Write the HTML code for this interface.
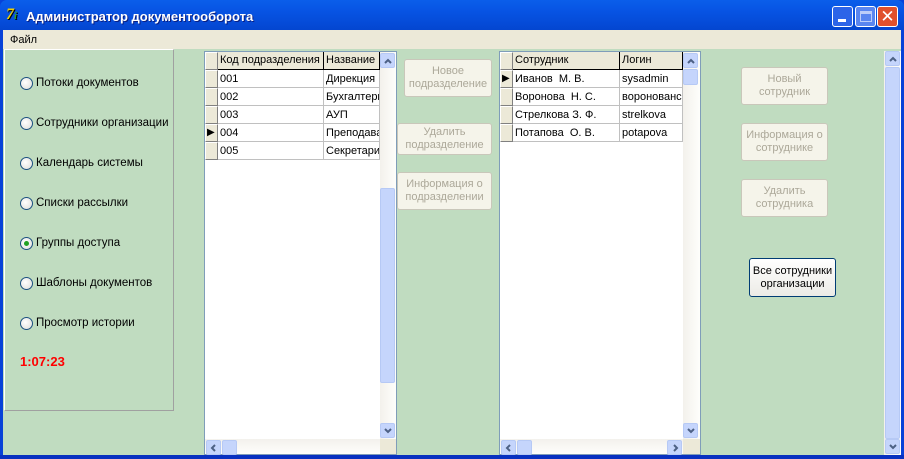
<!DOCTYPE html>
<html><head><meta charset="utf-8"><style>
*{box-sizing:border-box;margin:0;padding:0}
body{width:904px;height:459px;overflow:hidden;font-family:Tahoma,"Liberation Sans","DejaVu Sans",sans-serif;font-size:11px;position:relative;background:#0842D8}
.abs{position:absolute}
.title{left:0;top:0;width:904px;height:30px;background:linear-gradient(#0A5EEA,#0753E3 40%,#0446D0);border-radius:7px 7px 0 0}
.ttext{left:26px;top:9px;color:#fff;font-weight:bold;font-size:13px;text-shadow:1px 1px #0A1E80}
.menu{left:3px;top:30px;width:898px;height:19px;background:#ECE9D8}
.body{left:3px;top:49px;width:898px;height:406px;background:#C0DCC0}
.panel{left:4px;top:49px;width:170px;height:362px;border-left:1px solid #fff;border-top:1px solid #fff;border-right:1px solid #A0A0A0;border-bottom:1px solid #A0A0A0}
.radio{left:20px;width:13px;height:13px;border-radius:50%;border:1px solid #1C5180;background:radial-gradient(circle at 40% 40%,#fff,#DCDCD7)}
.rl{left:36px;color:#000;font-size:11.5px}
.grid{background:#fff;border:1px solid #7F9DB9}
.hd{position:absolute;background:#ECE9D8;border-right:1px solid #000;border-bottom:1px solid #000;height:18px;padding:2px 2px;white-space:nowrap;overflow:hidden}
.cell{position:absolute;height:18px;border-right:1px solid #C0C0C0;border-bottom:1px solid #C0C0C0;padding:3px 2px;white-space:nowrap;overflow:hidden}
.ind{position:absolute;background:#ECE9D8;border-right:1px solid #808080;border-bottom:1px solid #808080;border-left:1px solid #fff;border-top:1px solid #fff;height:18px;width:13px}
.vs{background:linear-gradient(90deg,#F3F1EC,#FEFEFB)}
.sb{position:absolute;width:15px;height:15px;border:1px solid #B6C9F5;background:#C5D5FC;border-radius:2px}
.sb svg{position:absolute;left:3px;top:3px}
.btn{position:absolute;background:#F5F4EA;border:1px solid #C9C7BA;border-radius:3px;color:#ACA899;text-align:center;display:flex;align-items:center;justify-content:center;line-height:13px}
.wb{position:absolute;top:6px;width:21px;height:21px;border:1px solid #fff;border-radius:3px;background:#2C64E8}
</style></head><body>
<div class="abs title"></div>
<div class="abs" style="left:6px;top:6px;color:#F0D000;font-weight:bold;font-size:16px;font-style:italic;font-family:'Liberation Serif',serif;text-shadow:1px 1px #000">7<span style="color:#30A030;font-size:11px">i</span></div>
<div class="abs ttext">Администратор документооборота</div>
<div class="wb" style="left:832px"><div class="abs" style="left:5px;top:12px;width:8px;height:3px;background:#fff"></div></div>
<div class="wb" style="left:855px;background:#5A86F0"><div class="abs" style="left:4px;top:4px;width:12px;height:11px;border:1px solid #fff;border-top-width:3px;opacity:.6"></div></div>
<div class="wb" style="left:877px;background:#E0502C;color:#fff;font-size:17px;font-weight:bold;text-align:center;line-height:19px">✕</div>
<div class="abs menu"><span class="abs" style="left:7px;top:4px">Файл</span></div>
<div class="abs body"></div>
<div class="abs panel"></div>
<div class="abs radio" style="top:77px"></div><div class="abs rl" style="top:77px">Потоки документов</div>
<div class="abs radio" style="top:117px"></div><div class="abs rl" style="top:117px">Сотрудники организации</div>
<div class="abs radio" style="top:157px"></div><div class="abs rl" style="top:157px">Календарь системы</div>
<div class="abs radio" style="top:197px"></div><div class="abs rl" style="top:197px">Списки рассылки</div>
<div class="abs radio" style="top:237px"><div class="abs" style="left:3px;top:3px;width:5px;height:5px;border-radius:50%;background:#21A121"></div></div><div class="abs rl" style="top:237px">Группы доступа</div>
<div class="abs radio" style="top:277px"></div><div class="abs rl" style="top:277px">Шаблоны документов</div>
<div class="abs radio" style="top:317px"></div><div class="abs rl" style="top:317px">Просмотр истории</div>
<div class="abs" style="left:20px;top:354px;color:#F00;font-weight:bold;font-size:13px">1:07:23</div>

<!-- grid1 -->
<div class="abs grid" style="left:204px;top:51px;width:193px;height:404px">
<div class="ind" style="left:0;top:0"></div>
<div class="hd" style="left:13px;top:0;width:106px">Код подразделения</div>
<div class="hd" style="left:119px;top:0;width:56px">Название</div>
<div class="ind" style="left:0;top:18px"></div><div class="cell" style="left:13px;top:18px;width:106px">001</div><div class="cell" style="left:119px;top:18px;width:56px">Дирекция</div>
<div class="ind" style="left:0;top:36px"></div><div class="cell" style="left:13px;top:36px;width:106px">002</div><div class="cell" style="left:119px;top:36px;width:56px">Бухгалтерия</div>
<div class="ind" style="left:0;top:54px"></div><div class="cell" style="left:13px;top:54px;width:106px">003</div><div class="cell" style="left:119px;top:54px;width:56px">АУП</div>
<div class="ind" style="left:0;top:72px"><span style="position:absolute;left:1px;top:2px;font-size:10px">▶</span></div><div class="cell" style="left:13px;top:72px;width:106px">004</div><div class="cell" style="left:119px;top:72px;width:56px">Преподаватели</div>
<div class="ind" style="left:0;top:90px"></div><div class="cell" style="left:13px;top:90px;width:106px">005</div><div class="cell" style="left:119px;top:90px;width:56px">Секретариат</div>
<div class="abs vs" style="left:175px;top:0;width:16px;height:387px"></div>
<div class="sb" style="left:175px;top:1px"><svg width="8" height="8"><path d="M1 6L4 3L7 6" stroke="#4D6185" stroke-width="2" fill="none"/></svg></div>
<div class="sb" style="left:175px;top:136px;height:195px"></div>
<div class="sb" style="left:175px;top:371px"><svg width="8" height="8"><path d="M1 2L4 5L7 2" stroke="#4D6185" stroke-width="2" fill="none"/></svg></div>
<div class="abs" style="left:0;top:387px;width:191px;height:15px;background:linear-gradient(#F3F1EC,#FEFEFB)"></div>
<div class="sb" style="left:1px;top:388px"><svg width="8" height="8"><path d="M5 1L2 4L5 7" stroke="#4D6185" stroke-width="2" fill="none"/></svg></div><div class="sb" style="left:17px;top:388px"></div>
<div class="abs" style="left:175px;top:387px;width:16px;height:15px;background:#ECE9D8"></div>
</div>
<div class="btn" style="left:404px;top:59px;width:88px;height:38px">Новое<br>подразделение</div>
<div class="btn" style="left:397px;top:123px;width:95px;height:32px">Удалить<br>подразделение</div>
<div class="btn" style="left:397px;top:172px;width:95px;height:38px">Информация о<br>подразделении</div>

<!-- grid2 -->
<div class="abs grid" style="left:499px;top:51px;width:202px;height:404px">
<div class="ind" style="left:0;top:0"></div>
<div class="hd" style="left:13px;top:0;width:107px">Сотрудник</div>
<div class="hd" style="left:120px;top:0;width:63px">Логин</div>
<div class="ind" style="left:0;top:18px"><span style="position:absolute;left:1px;top:2px;font-size:10px">▶</span></div><div class="cell" style="left:13px;top:18px;width:107px">Иванов &nbsp;М. В.</div><div class="cell" style="left:120px;top:18px;width:63px">sysadmin</div>
<div class="ind" style="left:0;top:36px"></div><div class="cell" style="left:13px;top:36px;width:107px">Воронова &nbsp;Н. С.</div><div class="cell" style="left:120px;top:36px;width:63px">воронованс</div>
<div class="ind" style="left:0;top:54px"></div><div class="cell" style="left:13px;top:54px;width:107px">Стрелкова З. Ф.</div><div class="cell" style="left:120px;top:54px;width:63px">strelkova</div>
<div class="ind" style="left:0;top:72px"></div><div class="cell" style="left:13px;top:72px;width:107px">Потапова &nbsp;О. В.</div><div class="cell" style="left:120px;top:72px;width:63px">potapova</div>
<div class="abs vs" style="left:183px;top:0;width:17px;height:387px"></div>
<div class="sb" style="left:183px;top:1px"><svg width="8" height="8"><path d="M1 6L4 3L7 6" stroke="#4D6185" stroke-width="2" fill="none"/></svg></div>
<div class="sb" style="left:183px;top:17px;height:16px"></div>
<div class="sb" style="left:183px;top:371px"><svg width="8" height="8"><path d="M1 2L4 5L7 2" stroke="#4D6185" stroke-width="2" fill="none"/></svg></div>
<div class="abs" style="left:0;top:387px;width:200px;height:15px;background:linear-gradient(#F3F1EC,#FEFEFB)"></div>
<div class="sb" style="left:1px;top:388px"><svg width="8" height="8"><path d="M5 1L2 4L5 7" stroke="#4D6185" stroke-width="2" fill="none"/></svg></div><div class="sb" style="left:17px;top:388px"></div><div class="sb" style="left:167px;top:388px"><svg width="8" height="8"><path d="M3 1L6 4L3 7" stroke="#4D6185" stroke-width="2" fill="none"/></svg></div>
<div class="abs" style="left:183px;top:387px;width:17px;height:15px;background:#ECE9D8"></div>
</div>
<div class="btn" style="left:741px;top:67px;width:87px;height:38px">Новый<br>сотрудник</div>
<div class="btn" style="left:741px;top:123px;width:87px;height:38px">Информация о<br>сотруднике</div>
<div class="btn" style="left:741px;top:179px;width:87px;height:38px">Удалить<br>сотрудника</div>
<div class="btn" style="left:749px;top:258px;width:87px;height:39px;color:#000;border:1px solid #003C74;background:linear-gradient(#fff,#ECEBE6)">Все сотрудники<br>организации</div>

<div class="abs vs" style="left:884px;top:51px;width:17px;height:404px"></div>
<div class="sb" style="left:885px;top:51px"><svg width="8" height="8"><path d="M1 6L4 3L7 6" stroke="#4D6185" stroke-width="2" fill="none"/></svg></div>
<div class="sb" style="left:885px;top:67px;height:372px"></div>
<div class="sb" style="left:885px;top:439px"><svg width="8" height="8"><path d="M1 2L4 5L7 2" stroke="#4D6185" stroke-width="2" fill="none"/></svg></div>
<div class="abs" style="left:0;top:455px;width:904px;height:4px;background:#0831C0"></div>
</body></html>
